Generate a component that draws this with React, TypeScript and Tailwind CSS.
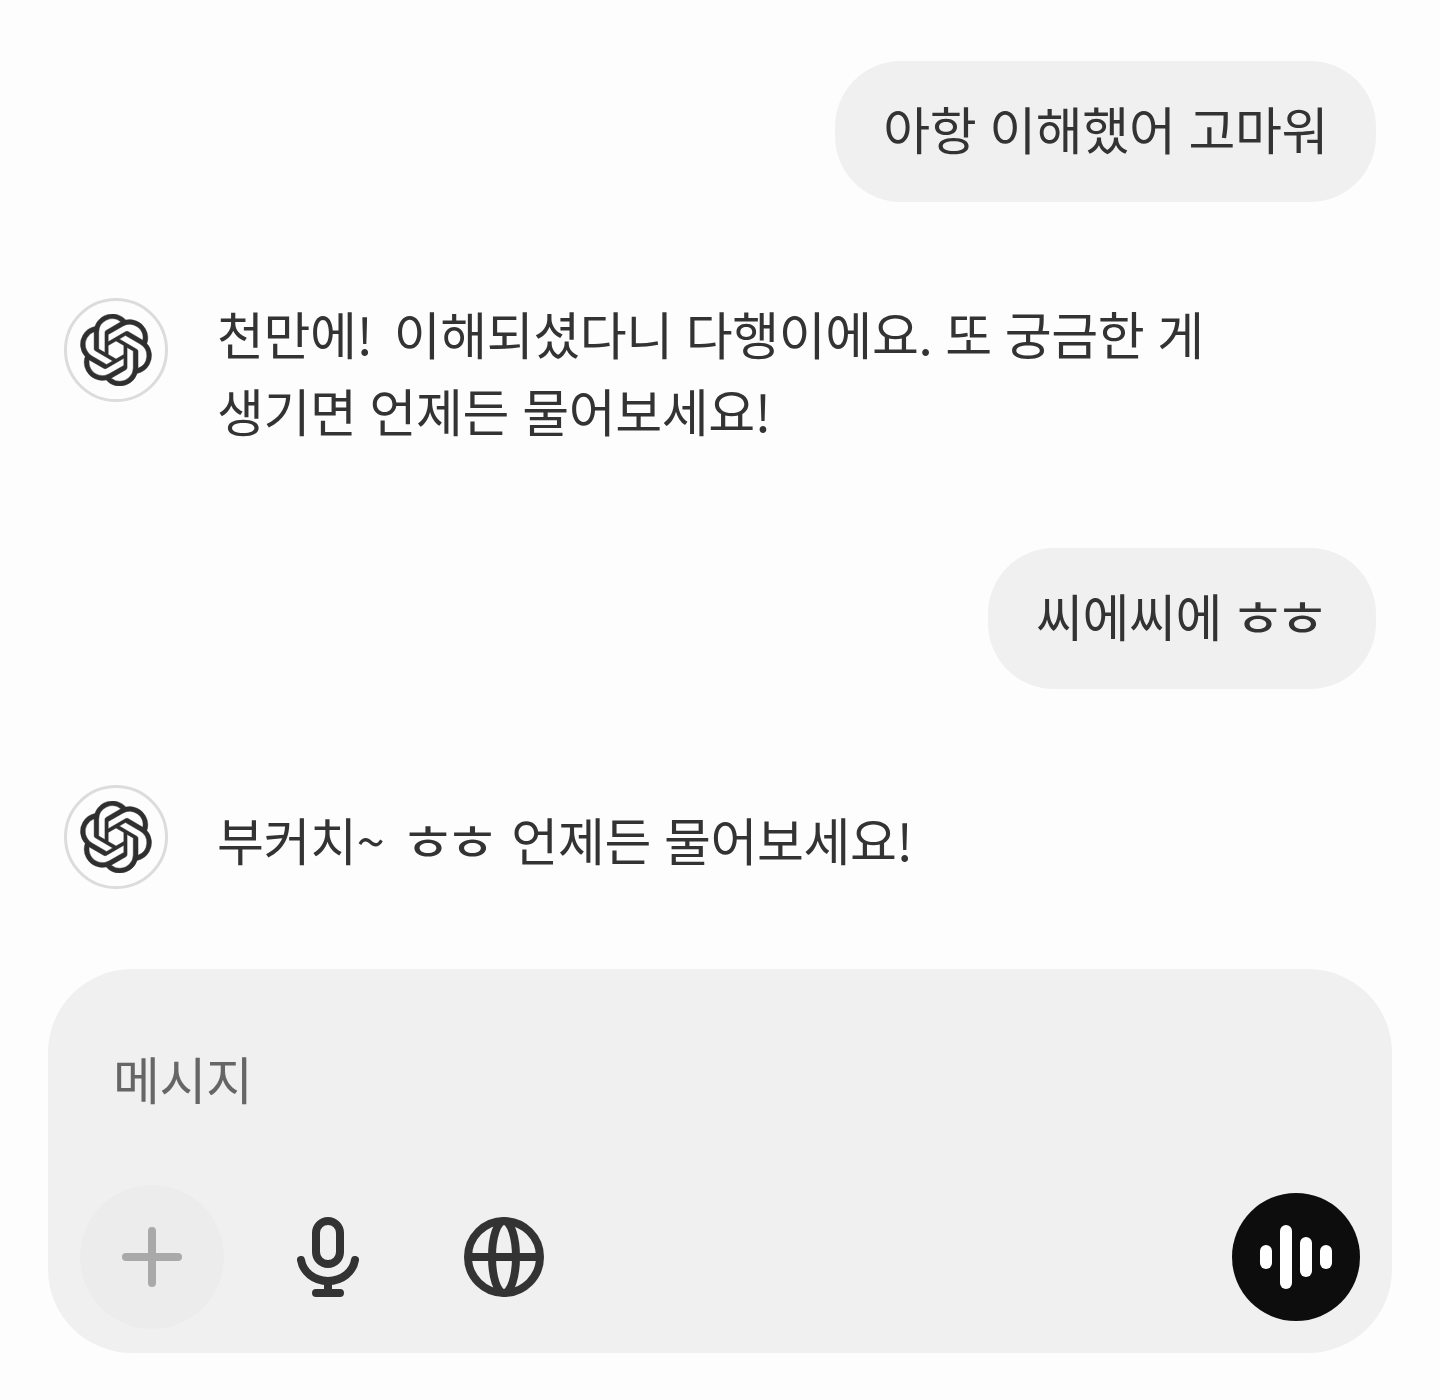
import { ReactNode } from "react";
import { SiOpenai } from "react-icons/si";

const font = "font-['Noto_Sans_CJK_KR','Noto_Sans',sans-serif]";
const type = "text-[51px] leading-[77px] tracking-[-0.4px] [word-spacing:2px] text-[#333333]";

function Hh({ className }: { className: string }) {
  return <span className={`inline-block origin-center scale-x-[1.2] tracking-[-10px] ${className}`}>ㅎㅎ</span>;
}

function Bubble({ children, className }: { children: ReactNode; className: string }) {
  return (
    <div className={`flex justify-end pr-16 ${className}`}>
      <div className={`flex h-[141px] items-center whitespace-pre rounded-[66px] bg-[#f0f0f0] px-12 pb-[6px] ${type}`}>
        <span>{children}</span>
      </div>
    </div>
  );
}

function Answer({ children, className, textClass }: { children: ReactNode; className: string; textClass: string }) {
  return (
    <div className={`flex pl-16 ${className}`}>
      <div className="flex h-[104px] w-[104px] shrink-0 items-center justify-center rounded-full border-[3px] border-[#dcdcdc] bg-[#fdfdfd]">
        <SiOpenai className="h-[72px] w-[72px] text-[#2f2f2f]" stroke="currentColor" strokeWidth={0.15} />
      </div>
      <div className={`ml-[49px] whitespace-pre ${type} ${textClass}`}>{children}</div>
    </div>
  );
}

export default function App() {
  return (
    <div className={`h-[1400px] w-[1440px] overflow-hidden bg-[#fdfdfd] pt-[61px] ${font}`}>
      <Bubble className="">아항 이해했어 고마워</Bubble>
      <Answer className="mt-[96px]" textClass="mt-[-3px]">
        <div>
          <span className="mr-[8px]">천만에!</span> 이해되셨다니 다행이에요. 또 궁금한 게
        </div>
        <div>생기면 언제든 물어보세요!</div>
      </Answer>
      <Bubble className="mt-[99px]">
        씨에씨에 <Hh className="ml-[2px] mr-[17px]" />
      </Bubble>
      <Answer className="mt-[96px]" textClass="mt-[16px]">
        <div>
          부커치~ <Hh className="ml-[9px] mr-[18px]" /> 언제든 물어보세요!
        </div>
      </Answer>
      <div className="mx-12 mt-[80px] flex h-[384px] flex-col justify-between rounded-[84px] bg-[#f0f0f0] pb-6 pl-8 pr-8">
        <div className={`mt-[71px] pl-[33px] ${type} text-[#666666]`}>메시지</div>
        <div className="flex items-center">
          <div className="flex h-[144px] w-[144px] items-center justify-center rounded-full bg-[#ececec]">
            <svg width="64" height="64" viewBox="0 0 64 64" fill="none" stroke="#a9a9a9" strokeWidth="8" strokeLinecap="round">
              <path d="M6 32h52M32 6v52" />
            </svg>
          </div>
          <svg className="ml-[69px]" width="70" height="80" viewBox="0 0 70 80" fill="none" stroke="#333333" strokeWidth="8" strokeLinecap="round">
            <rect x="23" y="4" width="24" height="43" rx="12" />
            <path d="M8 43c2 12 13 21 27 21s25-9 27-21" />
            <path d="M35 64v12M23 76h24" />
          </svg>
          <svg className="ml-[101px]" width="80" height="80" viewBox="0 0 80 80" fill="none" stroke="#333333" strokeWidth="8">
            <circle cx="40" cy="40" r="36" />
            <ellipse cx="40" cy="40" rx="12" ry="36" />
            <path d="M4 40h72" />
          </svg>
          <div className="ml-auto flex h-32 w-32 items-center justify-center rounded-full bg-[#0d0d0d]">
            <svg width="72" height="64" viewBox="0 0 72 64" fill="#ffffff">
              <rect x="0" y="20" width="12" height="24" rx="6" />
              <rect x="20" y="0" width="12" height="64" rx="6" />
              <rect x="40" y="12" width="12" height="40" rx="6" />
              <rect x="60" y="20" width="12" height="24" rx="6" />
            </svg>
          </div>
        </div>
      </div>
    </div>
  );
}
